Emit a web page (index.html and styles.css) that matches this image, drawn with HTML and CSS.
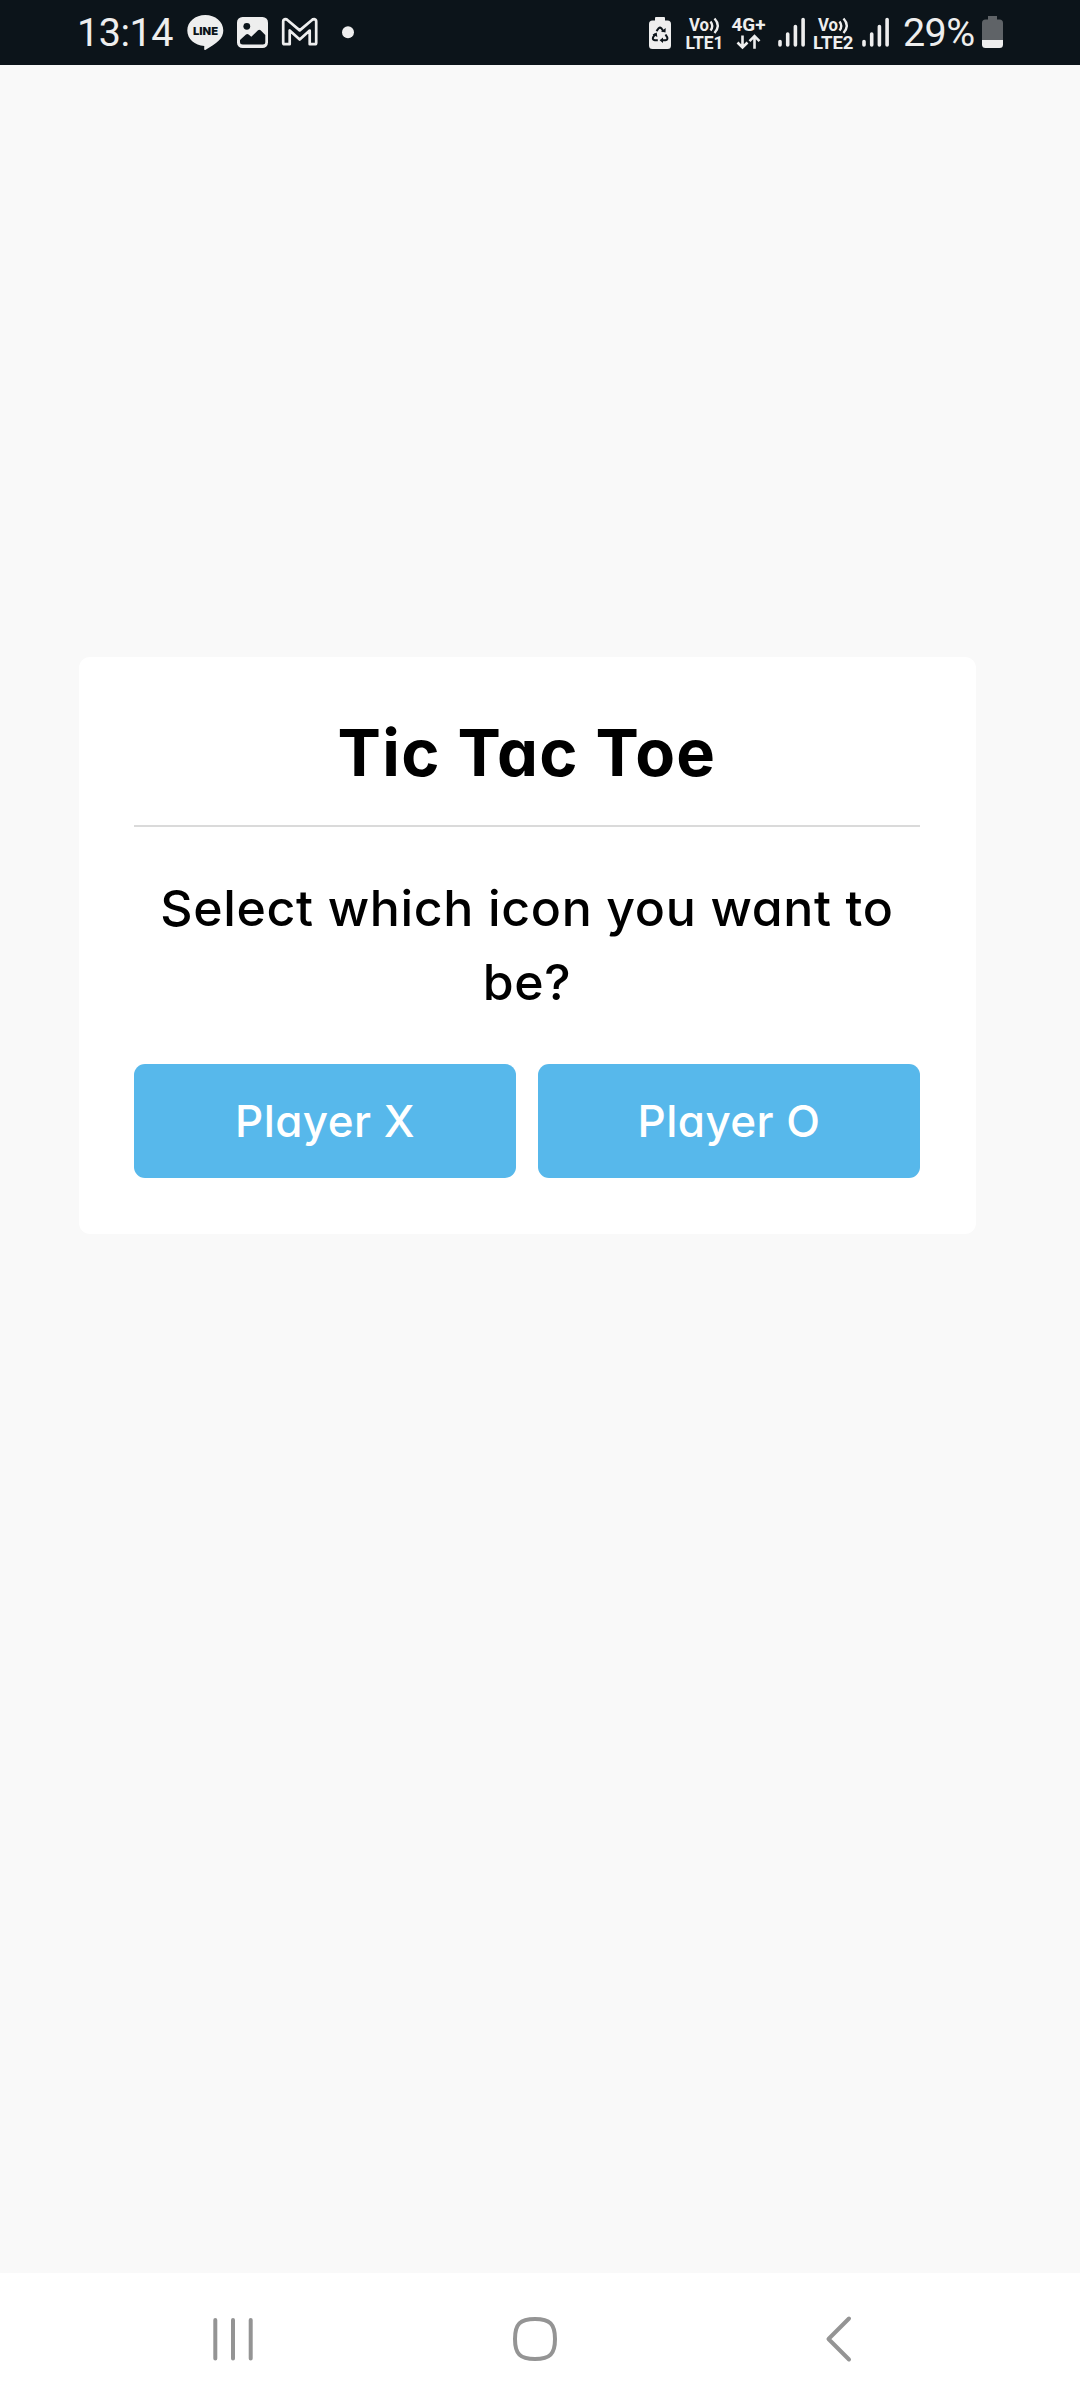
FILE: index.html
```html
<!DOCTYPE html>
<html lang="en">
<head>
<meta charset="utf-8">
<title>Tic Tac Toe</title>
<link rel="stylesheet" href="styles.css">
</head>
<body>
<div class="screen">
  <header class="status">
    <span class="clock">13:14</span>
    <svg width="48" height="65" viewBox="180 0 48 65">
      <path fill="#eee" d="M205.300 15c10 0 18 6.500 18 15.500 0 8-6.500 13-18 19.500-1 .3-1.300-.3-1-4-9.500-.5-17-7-17-15.500 0-9 8-15.500 18-15.500z"/>
      <text class="line-label" x="193" y="35" textLength="25" lengthAdjust="spacingAndGlyphs">LINE</text>
    </svg>
    <svg width="47" height="65" viewBox="228 0 47 65">
      <rect x="237" y="17" width="31" height="31" rx="5.500" fill="#eee"/>
      <circle cx="246.800" cy="26.300" r="3.400" fill="#0c141a"/>
      <path fill="#0c141a" d="M240 40l6-5.500q1.300-1 2.600 0l2.700 2.300 6.700-6.500q1.300-1 2.600 0l4.700 4.700v7q0 2.500-2.500 2.500h-20q-2.800 0-2.800-2.500z"/>
    </svg>
    <svg width="55" height="65" viewBox="275 0 55 65">
      <path fill="none" stroke="#eee" stroke-width="2.700" stroke-linejoin="round" d="M283.200 43V21.500q0-2 2-2.300 1.500 0 2.500 1l12 10.200 12-10.200q1-1 2.500-1 2 .3 2 2.300V43q0 1.200-1.300 1.200h-5.200V30.500l-10 9-10-9v13.700h-5.200q-1.300 0-1.300-1.200z"/>
    </svg>
    <svg class="dot" width="36" height="65" viewBox="330 0 36 65"><circle cx="348" cy="32.300" r="6" fill="#eee"/></svg>
    <svg width="38" height="65" viewBox="641 0 38 65">
      <path fill="#eee" d="M656 17h8q1 0 1 1v2.500h2.500q3.500 0 3.500 3.500v21.500q0 3.500-3.500 3.500h-15q-3.500 0-3.500-3.500V24q0-3.500 3.500-3.500h2.500V18q0-1 1-1z"/>
      <path fill="none" stroke="#0c141a" stroke-width="2" d="M656.500 31.200l2.200-3q1.300-1.200 2.600 0l2.400 3.500M665.500 34.500l1.800 3q.6 2.300-1.800 2.700h-3.500M657.800 40.200h-3q-2.500-.4-1.800-2.700l2.200-3.500"/>
      <path fill="#0c141a" d="M661 31.500l4.500 1 .2-4.500zM663 37.500v5.400l-3.400-2.700zM652.500 34.500l4.200-2 .6 4.500z"/>
    </svg>
    <svg class="net" width="48" height="65" viewBox="679 0 48 65">
      <text x="689" y="31" textLength="20" lengthAdjust="spacingAndGlyphs">Vo</text>
      <path class="wave" d="M710.500 21.500q3.500 4.500 0 9M714.500 18.500q6.500 7 0 14.500"/>
      <text x="685.500" y="48.500" textLength="38" lengthAdjust="spacingAndGlyphs">LTE1</text>
    </svg>
    <svg class="net" width="45" height="65" viewBox="727 0 45 65">
      <text x="731.500" y="31" textLength="34" lengthAdjust="spacingAndGlyphs">4G+</text>
      <path class="arrow" d="M742.500 35.500v12M737.500 42.500l5 5 5-5M754.500 48.800V36.500M749.500 41.200l5-5 5 5"/>
    </svg>
    <svg width="37" height="65" viewBox="772 0 37 65">
      <path class="bars" d="M780 41.500v3.500M787.700 34v11M795.400 26.500V45M803.100 19.500V45"/>
    </svg>
    <svg class="net" width="47" height="65" viewBox="809 0 47 65">
      <text x="818" y="31" textLength="20" lengthAdjust="spacingAndGlyphs">Vo</text>
      <path class="wave" d="M839.500 21.500q3.500 4.500 0 9M843.500 18.500q6.500 7 0 14.500"/>
      <text x="813" y="48.500" textLength="40.500" lengthAdjust="spacingAndGlyphs">LTE2</text>
    </svg>
    <svg width="47" height="65" viewBox="856 0 47 65">
      <path class="bars" d="M864 41.500v3.500M871.700 34v11M879.400 26.500V45M887.100 19.500V45"/>
    </svg>
    <span class="percent">29%</span>
    <svg width="24" height="65" viewBox="980 0 24 65">
      <path fill="#5f6367" d="M988 16h9v3.500h2.500q3.500 0 3.500 3.500V40h-21V23q0-3.500 3.500-3.500h2.500z"/>
      <path fill="#eee" d="M982 40h21v4.500q0 3.500-3.500 3.500h-14q-3.500 0-3.500-3.500z"/>
    </svg>
  </header>
  <main class="content">
    <section class="card">
      <h1 class="title">Tic Tac Toe</h1>
      <p class="question">Select which icon you want to be?</p>
      <div class="choices">
        <button class="choice">Player X</button>
        <button class="choice">Player O</button>
      </div>
    </section>
  </main>
  <nav class="nav">
    <svg width="44" height="48" viewBox="0 0 44 48"><path d="M4.300 5v38.500M22 5v38.500M39.700 5v38.500"/></svg>
    <svg class="home" width="48" height="48" viewBox="0 0 48 48"><path d="M24 4c15 0 20 5 20 20s-5 20-20 20S4 39 4 24 9 4 24 4z"/></svg>
    <svg width="28" height="48" viewBox="0 0 28 48"><path d="M25 3.500L4.500 24 25 44.500"/></svg>
  </nav>
</div>
</body>
</html>
```
FILE: styles.css
```css
* { box-sizing: border-box; }
body { margin: 0; background: #f9f9f9; }
svg { display: block; flex: none; }
.screen {
  display: flex;
  flex-direction: column;
  width: 1080px;
  height: 2408px;
  overflow: hidden;
  font-family: Inter, "Liberation Sans", sans-serif;
}
.status {
  display: flex;
  align-items: center;
  flex: none;
  height: 65px;
  background: #0c141a;
  color: #eee;
  font: 39.5px/65px Roboto, sans-serif;
}
.clock { width: 180px; padding-left: 77px; letter-spacing: -0.5px; }
.dot { margin-right: 275px; }
.percent { width: 77px; letter-spacing: -0.6px; }
.line-label { font: 900 11px Inter, sans-serif; fill: #0c141a; }
.net text { font: 700 17.5px Roboto, sans-serif; fill: #eee; }
.wave { fill: none; stroke: #eee; stroke-width: 2.4; }
.arrow { fill: none; stroke: #eee; stroke-width: 2.6; }
.bars { fill: none; stroke: #eee; stroke-width: 3.6; stroke-linecap: round; }
.content { flex: 1; padding: 592px 104px 0 78.5px; }
.card {
  height: 577px;
  padding: 56px 56px 0 55.5px;
  border-radius: 11px;
  background: #fff;
  color: #000;
  text-align: center;
}
.title {
  height: 114px;
  margin: 0;
  border-bottom: 2px solid #dadada;
  font-size: 65px;
  font-weight: 650;
  line-height: 79px;
  letter-spacing: 1.3px;
  font-feature-settings: "cv11";
}
.question {
  margin: 44px 0 0;
  font-size: 50px;
  font-weight: 480;
  line-height: 74px;
  letter-spacing: 0.65px;
  font-feature-settings: "cv11";
}
.choices { display: flex; gap: 22px; margin-top: 45px; }
.choice {
  flex: 1;
  height: 113.5px;
  padding: 0;
  border: 0;
  border-radius: 11px;
  background: #57b8eb;
  color: #fff;
  font: 480 44px/114px Inter, sans-serif;
  letter-spacing: 0.45px;
  font-feature-settings: "cv11";
}
.nav {
  display: flex;
  align-items: center;
  flex: none;
  height: 135px;
  padding: 0 0 3px 211px;
  background: #fff;
}
.home { margin: 0 265px 0 256px; }
.nav path {
  fill: none;
  stroke: #949494;
  stroke-width: 4;
  stroke-linecap: round;
  stroke-linejoin: round;
}
```
